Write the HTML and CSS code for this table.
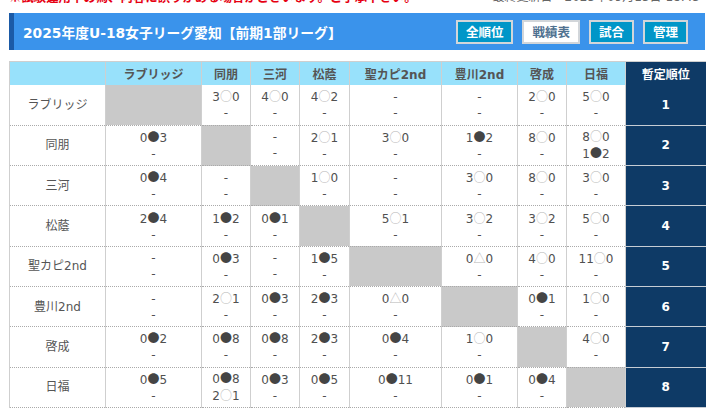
FILE: index.html
```html
<!DOCTYPE html>
<html lang="ja">
<head>
<meta charset="utf-8">
<title>2025年度U-18女子リーグ愛知</title>
<link rel="stylesheet" href="styles.css">
</head>
<body>
<div class="page">
  <div class="notice">
    <span class="warn">※試験運用中の為、内容に誤りがある場合がございます。ご了承下さい。</span>
    <span class="date">最終更新日：2025年09月15日 18:45</span>
  </div>
  <div class="titlebar">
    <h1 class="title">2025年度U-18女子リーグ愛知【前期1部リーグ】</h1>
    <nav class="btns">
      <span class="btn">全順位</span>
      <span class="btn active">戦績表</span>
      <span class="btn">試合</span>
      <span class="btn">管理</span>
    </nav>
  </div>
  <table class="grid">
    <colgroup>
      <col class="c96"><col class="c96"><col class="c49"><col class="c49"><col class="c50"><col class="c92"><col class="c76"><col class="c49"><col class="c59"><col class="c80">
    </colgroup>
    <thead>
      <tr>
        <th></th><th>ラブリッジ</th><th>同朋</th><th>三河</th><th>松蔭</th><th>聖カピ2nd</th><th>豊川2nd</th><th>啓成</th><th>日福</th><th class="rank">暫定順位</th>
      </tr>
    </thead>
    <tbody>
      <tr>
        <td class="team">ラブリッジ</td>
        <td class="self"></td>
        <td>3<span class="o">○</span>0<br>-</td>
        <td>4<span class="o">○</span>0<br>-</td>
        <td>4<span class="o">○</span>2<br>-</td>
        <td>-<br>-</td>
        <td>-<br>-</td>
        <td>2<span class="o">○</span>0<br>-</td>
        <td>5<span class="o">○</span>0<br>-</td>
        <td class="rank">1</td>
      </tr>
      <tr>
        <td class="team">同朋</td>
        <td>0<span class="x">●</span>3<br>-</td>
        <td class="self"></td>
        <td>-<br>-</td>
        <td>2<span class="o">○</span>1<br>-</td>
        <td>3<span class="o">○</span>0<br>-</td>
        <td>1<span class="x">●</span>2<br>-</td>
        <td>8<span class="o">○</span>0<br>-</td>
        <td>8<span class="o">○</span>0<br>1<span class="x">●</span>2</td>
        <td class="rank">2</td>
      </tr>
      <tr>
        <td class="team">三河</td>
        <td>0<span class="x">●</span>4<br>-</td>
        <td>-<br>-</td>
        <td class="self"></td>
        <td>1<span class="o">○</span>0<br>-</td>
        <td>-<br>-</td>
        <td>3<span class="o">○</span>0<br>-</td>
        <td>8<span class="o">○</span>0<br>-</td>
        <td>3<span class="o">○</span>0<br>-</td>
        <td class="rank">3</td>
      </tr>
      <tr>
        <td class="team">松蔭</td>
        <td>2<span class="x">●</span>4<br>-</td>
        <td>1<span class="x">●</span>2<br>-</td>
        <td>0<span class="x">●</span>1<br>-</td>
        <td class="self"></td>
        <td>5<span class="o">○</span>1<br>-</td>
        <td>3<span class="o">○</span>2<br>-</td>
        <td>3<span class="o">○</span>2<br>-</td>
        <td>5<span class="o">○</span>0<br>-</td>
        <td class="rank">4</td>
      </tr>
      <tr>
        <td class="team">聖カピ2nd</td>
        <td>-<br>-</td>
        <td>0<span class="x">●</span>3<br>-</td>
        <td>-<br>-</td>
        <td>1<span class="x">●</span>5<br>-</td>
        <td class="self"></td>
        <td>0<span class="o">△</span>0<br>-</td>
        <td>4<span class="o">○</span>0<br>-</td>
        <td>11<span class="o">○</span>0<br>-</td>
        <td class="rank">5</td>
      </tr>
      <tr>
        <td class="team">豊川2nd</td>
        <td>-<br>-</td>
        <td>2<span class="o">○</span>1<br>-</td>
        <td>0<span class="x">●</span>3<br>-</td>
        <td>2<span class="x">●</span>3<br>-</td>
        <td>0<span class="o">△</span>0<br>-</td>
        <td class="self"></td>
        <td>0<span class="x">●</span>1<br>-</td>
        <td>1<span class="o">○</span>0<br>-</td>
        <td class="rank">6</td>
      </tr>
      <tr>
        <td class="team">啓成</td>
        <td>0<span class="x">●</span>2<br>-</td>
        <td>0<span class="x">●</span>8<br>-</td>
        <td>0<span class="x">●</span>8<br>-</td>
        <td>2<span class="x">●</span>3<br>-</td>
        <td>0<span class="x">●</span>4<br>-</td>
        <td>1<span class="o">○</span>0<br>-</td>
        <td class="self"></td>
        <td>4<span class="o">○</span>0<br>-</td>
        <td class="rank">7</td>
      </tr>
      <tr>
        <td class="team">日福</td>
        <td>0<span class="x">●</span>5<br>-</td>
        <td>0<span class="x">●</span>8<br>2<span class="o">○</span>1</td>
        <td>0<span class="x">●</span>3<br>-</td>
        <td>0<span class="x">●</span>5<br>-</td>
        <td>0<span class="x">●</span>11<br>-</td>
        <td>0<span class="x">●</span>1<br>-</td>
        <td>0<span class="x">●</span>4<br>-</td>
        <td class="self"></td>
        <td class="rank">8</td>
      </tr>
    </tbody>
  </table>
</div>
</body>
</html>
```

FILE: styles.css
```css
body {
  margin: 0;
  background: #fff;
  color: #505050;
  font-family: "DejaVu Sans", "Noto Sans CJK JP", sans-serif;
}

.page {
  padding: 0 6px 0 9px;
}

.notice {
  display: flex;
  justify-content: space-between;
  align-items: center;
  height: 19px;
  margin-top: -12px;
  line-height: 19px;
}

.warn {
  color: #e60012;
  font-weight: bold;
  font-size: 12.4px;
  font-family: "Noto Sans CJK JP", sans-serif;
}

.date {
  color: #666;
  font-size: 12px;
  padding-right: 5px;
}

.titlebar {
  margin-top: 6px;
  height: 37px;
  background: #3a93eb;
  border-left: 5px solid #1b5aa6;
  display: flex;
  align-items: center;
  justify-content: space-between;
  padding: 0 17px 0 9px;
}

.title {
  margin: 0;
  color: #fff;
  font-weight: bold;
  font-size: 13.8px;
}

.btns {
  display: flex;
  gap: 9px;
}

.btn {
  height: 24px;
  box-sizing: border-box;
  border: 2px solid #d2d6da;
  background: #0096c8;
  color: #fff;
  font-weight: bold;
  font-size: 12.5px;
  padding: 0 8px;
  display: flex;
  align-items: center;
  font-family: "Noto Sans CJK JP", sans-serif;
}

.btn.active {
  background: #fff;
  color: #4f7190;
}

.grid {
  margin-top: 11px;
  width: 696px;
  table-layout: fixed;
  border-collapse: collapse;
  font-size: 12px;
}

.c96 { width: 96px; }
.c92 { width: 92px; }
.c80 { width: 80px; }
.c76 { width: 76px; }
.c59 { width: 59px; }
.c50 { width: 50px; }
.c49 { width: 49px; }

.grid th {
  height: 23px;
  padding: 0;
  background: #98e1fb;
  color: #555;
  font-weight: bold;
  font-size: 12px;
  border-top: 1px solid #cfcfcf;
  border-left: 1px solid #cfcfcf;
}

.grid td {
  height: 40.3px;
  box-sizing: border-box;
  padding: 0;
  text-align: center;
  vertical-align: middle;
  line-height: 16px;
  border-left: 1px solid #cfcfcf;
  border-bottom: 1px dotted #aaa;
}

.grid td.team {
  color: #555;
}

.grid td.self {
  background: #c9c9c9;
}

.grid .rank {
  background: #0e3a66;
  color: #fff;
  font-weight: bold;
}

.grid td.rank {
  border-bottom: 1px solid #c6ccd4;
}

.o,
.x {
  font-family: "Noto Sans CJK JP", sans-serif;
}

.o {
  color: #b8b8b8;
}

.x {
  color: #444;
}
```
